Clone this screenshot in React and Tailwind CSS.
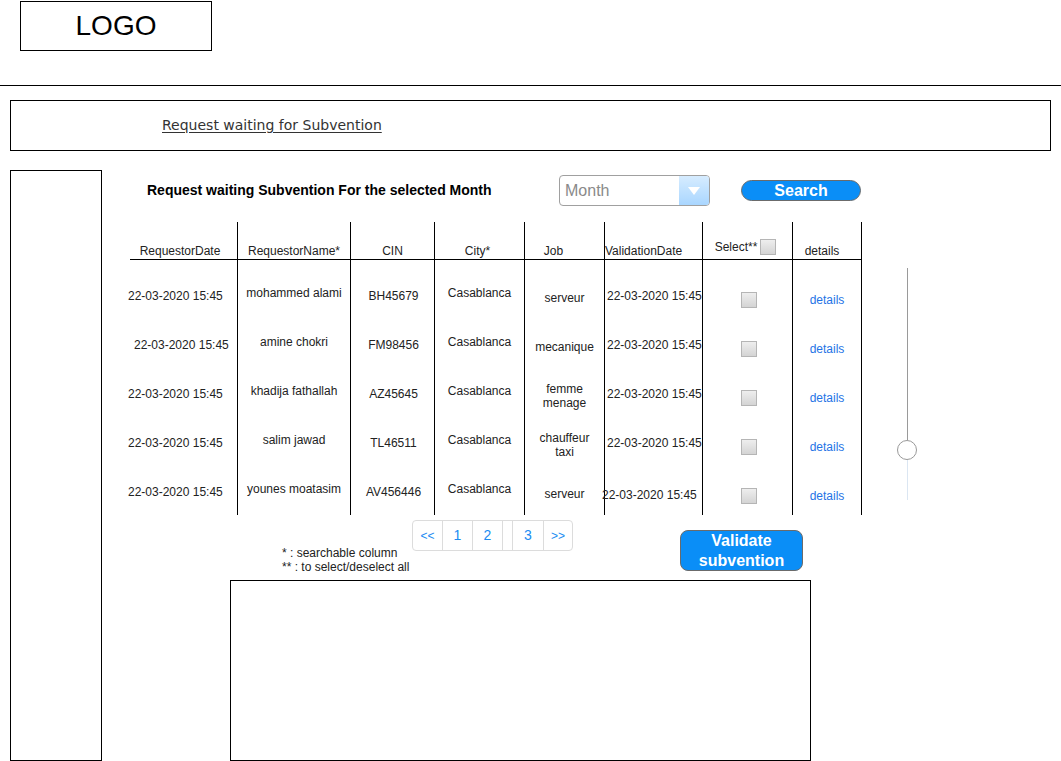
import React from 'react'

const rows = [
  { date: '22-03-2020 15:45', name: 'mohammed alami', cin: 'BH45679', city: 'Casablanca', job: ['serveur'], vdate: '22-03-2020 15:45' },
  { date: '22-03-2020 15:45', name: 'amine chokri', cin: 'FM98456', city: 'Casablanca', job: ['mecanique'], vdate: '22-03-2020 15:45', dateShift: true },
  { date: '22-03-2020 15:45', name: 'khadija fathallah', cin: 'AZ45645', city: 'Casablanca', job: ['femme', 'menage'], vdate: '22-03-2020 15:45' },
  { date: '22-03-2020 15:45', name: 'salim jawad', cin: 'TL46511', city: 'Casablanca', job: ['chauffeur', 'taxi'], vdate: '22-03-2020 15:45' },
  { date: '22-03-2020 15:45', name: 'younes moatasim', cin: 'AV456446', city: 'Casablanca', job: ['serveur'], vdate: '22-03-2020 15:45', vShift: true },
]

const Checkbox = () => (
  <div className="w-[16px] h-[16px] border border-[#b5b5b5] bg-gradient-to-b from-[#eeeeee] to-[#d4d4d4]" />
)

const columns = [
  { label: 'RequestorDate', w: 'w-[107px]', head: 'pr-[7px]', cell: 'justify-start pt-[2px]', render: (r) => <span className={r.dateShift ? 'ml-[4px]' : '-ml-[2px]'}>{r.date}</span> },
  { label: 'RequestorName*', w: 'w-[113px]', cell: 'justify-center pb-[4px]', render: (r) => r.name },
  { label: 'CIN', w: 'w-[84px]', cell: 'justify-center pt-[2px] pl-[2px]', render: (r) => r.cin },
  { label: 'City*', w: 'w-[90px]', head: 'pr-[4px]', cell: 'justify-center pb-[4px]', render: (r) => r.city },
  { label: 'Job', w: 'w-[80px]', head: 'pr-[22px]', cell: 'justify-center pt-[6px]', render: (r) => <span className="text-center leading-[14px]">{r.job.map((j) => <div key={j}>{j}</div>)}</span> },
  { label: 'ValidationDate', w: 'w-[98px]', head: 'justify-start', cell: 'justify-start pl-[2px] pt-[2px]', render: (r) => <span className={r.vShift ? '-ml-[5px] mt-[6px]' : ''}>{r.vdate}</span> },
  { label: 'select', w: 'w-[90px]', cell: 'justify-center pt-[10px] pl-[2px]', render: () => <Checkbox /> },
  { label: 'details', w: 'w-[70px]', head: 'pr-[10px]', cell: 'justify-center pt-[10px]', render: () => <span className="text-[#1f74e6]">details</span> },
]

const Table = () => (
  <div className="flex text-[12px] leading-[14px] text-[#222]">
    {columns.map((col, i) => (
      <div
        key={col.label}
        className={`${col.w} ${i > 0 ? 'border-l border-black' : ''} ${i === columns.length - 1 ? 'border-r border-black' : ''} flex flex-col`}
      >
        <div className={`h-[38px] border-b border-black flex items-end justify-center pb-[1px] ${col.head || ''}`}>
          {col.label === 'select' ? (
            <div className="flex items-center gap-[3px] pb-[3px] pr-[4px]">
              <span>Select**</span>
              <Checkbox />
            </div>
          ) : (
            <span>{col.label}</span>
          )}
        </div>
        <div className="pt-[10px]">
          {rows.map((r, k) => (
            <div key={k} className={`h-[49px] flex items-center whitespace-nowrap ${col.cell}`}>
              {col.render(r)}
            </div>
          ))}
        </div>
      </div>
    ))}
  </div>
)

const Slider = () => (
  <div className="ml-[35px] w-[20px] pt-[46px] flex flex-col items-center">
    <div className="w-px h-[172px] bg-[#9a9a9a]" />
    <div className="w-[20px] h-[20px] rounded-full border border-[#999] bg-white" />
    <div className="w-px h-[40px] bg-[#dbe6f2]" />
  </div>
)

const Pagination = () => {
  const items = [
    { t: '<<', w: 'w-[29px]', s: 'text-[12px]' },
    { t: '1', w: 'w-[30px]', s: 'text-[14px]' },
    { t: '2', w: 'w-[30px]', s: 'text-[14px]' },
    { t: '', w: 'w-[10px]', s: '' },
    { t: '3', w: 'w-[31px]', s: 'text-[14px]' },
    { t: '>>', w: 'w-[29px]', s: 'text-[12px]' },
  ]
  return (
    <div className="mt-[5px] h-[31px] flex border border-[#dcdcdc] rounded-[4px] text-[#1b8cf2]">
      {items.map((it, i) => (
        <div
          key={i}
          className={`${it.w} ${it.s} ${i > 0 ? 'border-l border-[#dcdcdc]' : ''} flex items-center justify-center`}
        >
          {it.t}
        </div>
      ))}
    </div>
  )
}

export default function App() {
  return (
    <div className="w-[1061px] h-[761px] overflow-hidden bg-white text-black font-['Liberation_Sans',Arial,sans-serif]">
      <div className="h-[85px] pl-[20px] pt-[1px]">
        <div className="w-[192px] h-[50px] border border-black flex items-center justify-center text-[28px] leading-none">
          LOGO
        </div>
      </div>
      <div className="border-t border-black" />

      <div className="mx-[10px] mt-[14px] h-[51px] border border-black flex items-center pl-[151px]">
        <span className="font-['DejaVu_Sans',sans-serif] text-[14px] text-[#333] underline underline-offset-2">
          Request waiting for Subvention
        </span>
      </div>

      <div className="mt-[19px] flex">
        <div className="ml-[10px] w-[92px] h-[591px] border border-black" />

        <div className="flex flex-col">
          <div className="mt-[5px] h-[31px] flex items-center">
            <div className="ml-[45px] w-[412px] text-[14px] font-bold">
              Request waiting Subvention For the selected Month
            </div>
            <div className="w-[151px] h-[31px] border border-[#a0a0a0] rounded-[4px] flex overflow-hidden">
              <div className="flex-1 flex items-center pl-[5px] text-[16px] text-[#8a8a8a]">Month</div>
              <div className="w-[30px] bg-gradient-to-b from-[#d6ecff] to-[#a9d6ff] flex items-center justify-center">
                <svg width="14" height="10" viewBox="0 0 14 10">
                  <polygon points="1,1 13,1 7,9" fill="white" />
                </svg>
              </div>
            </div>
            <div className="ml-[31px] w-[120px] h-[21px] rounded-full bg-[#0a8ef7] border border-[#6b6b6b] flex items-center justify-center text-white font-bold text-[16px] leading-none">
              Search
            </div>
          </div>

          <div className="mt-[16px] ml-[28px] flex">
            <Table />
            <Slider />
          </div>

          <div className="h-[65px] flex items-start">
            <div className="ml-[180px] mt-[31px] w-[130px] text-[12px] leading-[14px] text-[#222]">
              <div>* : searchable column</div>
              <div>** : to select/deselect all</div>
            </div>
            <Pagination />
            <div className="ml-[107px] mt-[15px] w-[123px] h-[41px] rounded-[8px] bg-[#0a8ef7] border border-[#6b6b6b] flex flex-col items-center justify-center text-white font-bold text-[16px] leading-[20px]">
              <span>Validate</span>
              <span>subvention</span>
            </div>
          </div>

          <div className="ml-[128px] w-[581px] h-[181px] border border-black" />
        </div>
      </div>
    </div>
  )
}
